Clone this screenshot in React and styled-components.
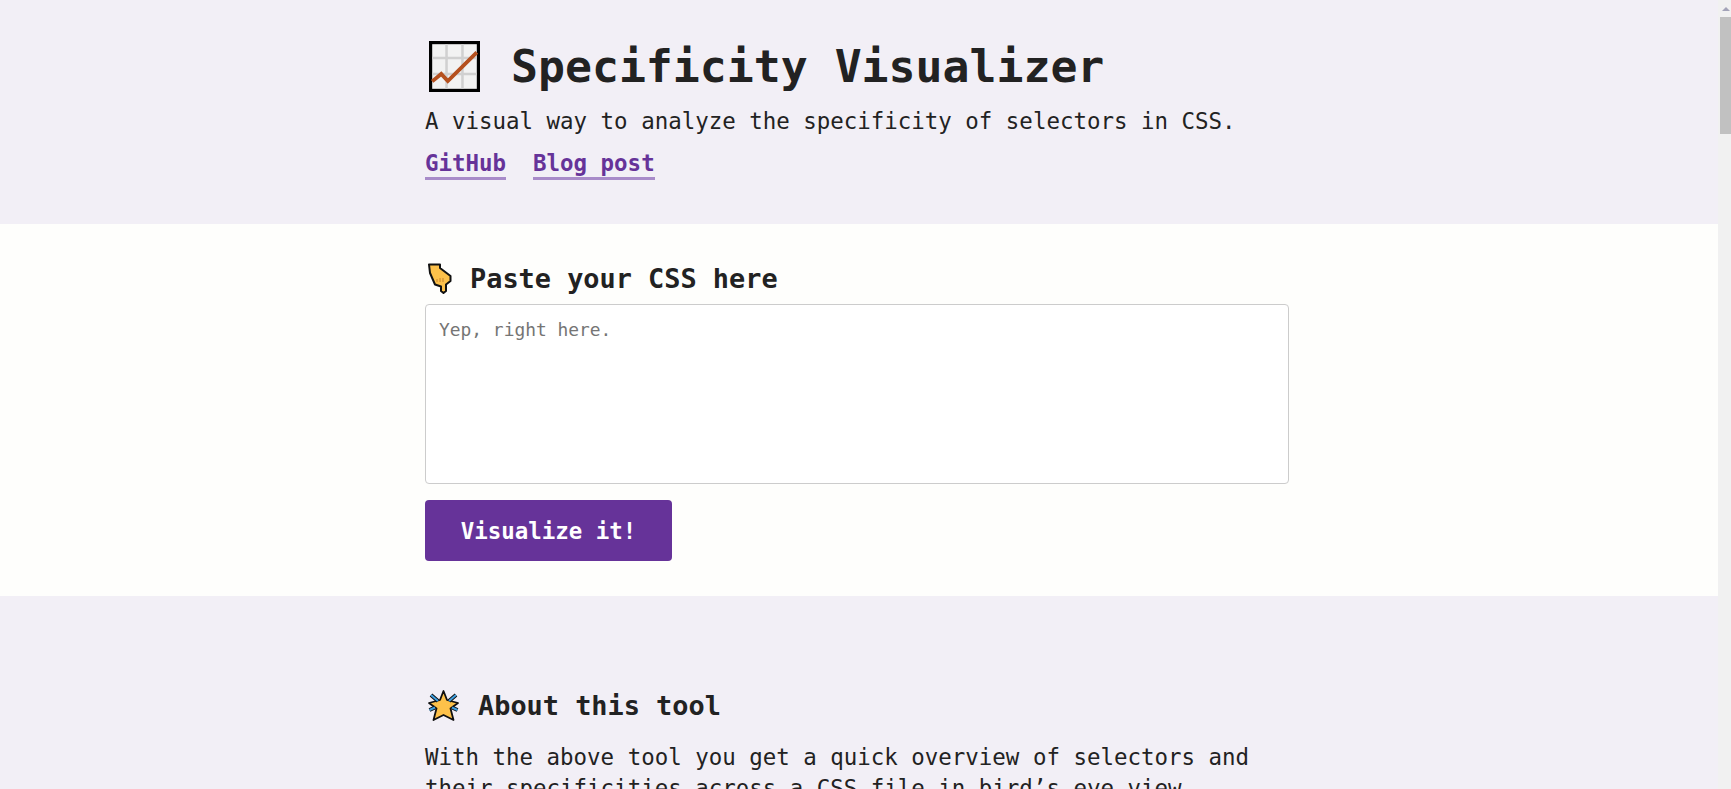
import React from "react"
import styled, { createGlobalStyle } from "styled-components"

const purple = "#663399"
const ink = "#222222"
const scrollbarWidth = 13

const GlobalStyle = createGlobalStyle`
  body {
    margin: 0;
    background-color: #f2eff6;
    color: ${ink};
    font-family: "DejaVu Sans Mono", "Liberation Mono", monospace;
    font-size: 22.45px;
  }
`

const Page = styled.div`
  margin-right: ${scrollbarWidth}px;
`

const Scrollbar = styled.div`
  position: fixed;
  top: 0;
  right: 0;
  bottom: 0;
  width: ${scrollbarWidth}px;
  background-color: #f1f1f1;
`

const ScrollArrow = styled.div`
  position: absolute;
  top: 7px;
  left: 4px;
  width: 0;
  height: 0;
  border-left: 4px solid transparent;
  border-right: 4px solid transparent;
  border-bottom: 4px solid #a3a3b8;
`

const ScrollThumb = styled.div`
  position: absolute;
  top: 17px;
  left: 2px;
  width: 11px;
  height: 117px;
  background-color: #c1c1c1;
`

const Container = styled.div`
  width: 868px;
  margin: 0 auto;
`

const Header = styled.header`
  height: 224px;
  box-sizing: border-box;
  padding-top: 36px;
`

const Title = styled.h1`
  display: flex;
  align-items: center;
  margin: 0;
  height: 60px;
  font-size: 44.8px;
  font-weight: 700;
`

const TitleIcon = styled.svg`
  width: 51px;
  height: 51px;
  margin: 0 31px 0 4px;
`

const Tagline = styled.p`
  margin: 8px 0 0;
  line-height: 34px;
`

const LinkRow = styled.nav`
  display: flex;
  gap: 27px;
  margin-top: 11px;
`

const HeaderLink = styled.a`
  color: ${purple};
  font-weight: 700;
  line-height: 28px;
  text-decoration: none;
  border-bottom: 3px solid #a88bc9;
`

const PasteSection = styled.section`
  background-color: #fefefc;
  height: 372px;
  box-sizing: border-box;
  padding-top: 36px;
`

const SectionHeading = styled.h2`
  display: flex;
  align-items: center;
  margin: 0;
  font-size: 26.9px;
  font-weight: 700;
  height: 36px;
`

const HandIcon = styled.svg`
  width: 24px;
  height: 31px;
  margin: 0 18px 0 3px;
`

const StarIcon = styled.svg`
  width: 31px;
  height: 31px;
  margin: 0 19px 0 3px;
`

const CssInput = styled.textarea`
  display: block;
  box-sizing: border-box;
  width: 864px;
  height: 180px;
  margin-top: 8px;
  padding: 13px;
  background-color: #ffffff;
  border: 1px solid #cccccc;
  border-radius: 4px;
  font-family: inherit;
  font-size: 17.9px;
  line-height: 24px;
  resize: none;
  outline: none;

  ::placeholder {
    color: #8a8a8a;
  }
`

const SubmitButton = styled.button`
  display: block;
  width: 247px;
  height: 61px;
  margin-top: 16px;
  padding: 0;
  border: 0;
  border-radius: 4px;
  background-color: ${purple};
  color: #ffffff;
  font-family: inherit;
  font-size: 22.45px;
  font-weight: 700;
`

const AboutSection = styled.section`
  padding-top: 91px;
`

const AboutText = styled.p`
  margin: 19px 0 0;
  line-height: 31px;
`

const ChartEmoji = () => (
  <TitleIcon viewBox="0 0 48 48" aria-hidden="true">
    <rect x="1.5" y="1.5" width="45" height="45" fill="#f2f2f2" stroke="#000" strokeWidth="3" />
    <path d="M16.500 3v42M31.500 3v42M3 16h42M3 31h42" stroke="#d0d0d0" strokeWidth="2.400" fill="none" />
    <path d="M3 38L11.500 31L17.700 37.700L45 10.700" stroke="#b5501e" strokeWidth="3.600" fill="none" />
  </TitleIcon>
)

const HandEmoji = () => (
  <HandIcon viewBox="0 0 24 31" aria-hidden="true">
    <path
      d="M1 1.500H12V5L22.500 13V18L18 21.500V28L15.500 30L13 28V23.500L7 21.500L2 10Z"
      fill="#fdc14a"
      stroke="#111"
      strokeWidth="2"
      strokeLinejoin="round"
    />
    <path d="M9 16V19M12 15V19M15 15V19" stroke="#c9822c" strokeWidth="1" fill="none" />
  </HandIcon>
)

const StarEmoji = () => (
  <StarIcon viewBox="0 0 31 31" aria-hidden="true">
    <path
      d="M15.500 1L19 10L30 13L22.500 18.500L25.500 30L15.500 25L5.500 30L8.500 18.500L1 13L12 10Z"
      fill="#fdc14a"
      stroke="#111"
      strokeWidth="1.800"
      strokeLinejoin="round"
    />
    <path d="M3 5L10 11M28 5L21 11M1.500 20L7 17.500M29.500 20L24 17.500" stroke="#111" strokeWidth="4" fill="none" />
    <path d="M3 5L10 11M28 5L21 11M1.500 20L7 17.500M29.500 20L24 17.500" stroke="#3f9fe0" strokeWidth="2" fill="none" />
  </StarIcon>
)

const App = () => (
  <>
    <GlobalStyle />
    <Page>
      <Header>
        <Container>
          <Title>
            <ChartEmoji />
            Specificity Visualizer
          </Title>
          <Tagline>A visual way to analyze the specificity of selectors in CSS.</Tagline>
          <LinkRow>
            <HeaderLink href="#github">GitHub</HeaderLink>
            <HeaderLink href="#blog">Blog post</HeaderLink>
          </LinkRow>
        </Container>
      </Header>
      <PasteSection>
        <Container>
          <SectionHeading>
            <HandEmoji />
            Paste your CSS here
          </SectionHeading>
          <CssInput placeholder="Yep, right here." />
          <SubmitButton type="button">Visualize it!</SubmitButton>
        </Container>
      </PasteSection>
      <AboutSection>
        <Container>
          <SectionHeading>
            <StarEmoji />
            About this tool
          </SectionHeading>
          <AboutText>
            With the above tool you get a quick overview of selectors and their specificities across a CSS
            file in bird’s-eye view.
          </AboutText>
        </Container>
      </AboutSection>
    </Page>
    <Scrollbar>
      <ScrollArrow />
      <ScrollThumb />
    </Scrollbar>
  </>
)

export default App
